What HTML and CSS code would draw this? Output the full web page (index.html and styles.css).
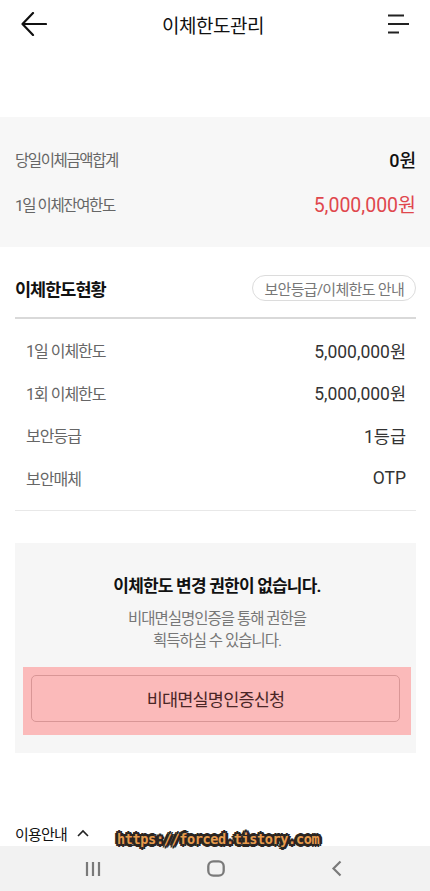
FILE: index.html
```html
<!DOCTYPE html>
<html lang="ko">
<head>
<meta charset="utf-8">
<title>이체한도관리</title>
<link rel="stylesheet" href="styles.css">
</head>
<body>
<div class="page">
  <header class="topbar">
    <button class="icon-btn back" aria-label="뒤로">
      <svg width="26" height="24" viewBox="0 0 26 24"><path d="M12 1 L1.5 12 L12 23 M1.5 12 H25" fill="none" stroke="#111" stroke-width="2.2" stroke-linecap="round" stroke-linejoin="round"/></svg>
    </button>
    <h1 class="title">이체한도관리</h1>
    <button class="icon-btn menu" aria-label="메뉴">
      <svg width="24" height="22" viewBox="0 0 24 22"><path d="M1 2.5 H17 M1 11 H22 M1 19.5 H12" fill="none" stroke="#222" stroke-width="2.2"/></svg>
    </button>
  </header>
  <div class="blank"></div>

  <section class="summary">
    <div class="sum-row"><span class="label">당일이체금액합계</span><span class="val">0원</span></div>
    <div class="sum-row"><span class="label">1일 이체잔여한도</span><span class="val red">5,000,000원</span></div>
  </section>

  <section class="status">
    <div class="status-head">
      <h2>이체한도현황</h2>
      <button class="pill">보안등급/이체한도 안내</button>
    </div>
    <div class="rows">
      <div class="row"><span class="k">1일 이체한도</span><span class="v">5,000,000원</span></div>
      <div class="row"><span class="k">1회 이체한도</span><span class="v">5,000,000원</span></div>
      <div class="row"><span class="k">보안등급</span><span class="v">1등급</span></div>
      <div class="row"><span class="k">보안매체</span><span class="v">OTP</span></div>
    </div>
  </section>

  <section class="notice">
    <p class="notice-title">이체한도 변경 권한이 없습니다.</p>
    <p class="notice-sub">비대면실명인증을 통해 권한을<br>획득하실 수 있습니다.</p>
    <div class="highlight">
      <button class="apply">비대면실명인증신청</button>
    </div>
  </section>

  <div class="guide">이용안내 <svg width="14" height="10" viewBox="0 0 14 10"><path d="M2 8 L7 3 L12 8" fill="none" stroke="#222" stroke-width="1.6"/></svg></div>

  <nav class="navbar">
    <svg class="nav-recent" width="16" height="16" viewBox="0 0 16 16"><path d="M2 1 V15 M8 1 V15 M14 1 V15" stroke="#7a7a7a" stroke-width="2.2"/></svg>
    <svg class="nav-home" width="18" height="17" viewBox="0 0 18 17"><rect x="1.3" y="1.3" width="15.4" height="14.4" rx="5" fill="none" stroke="#7a7a7a" stroke-width="2.3"/></svg>
    <svg class="nav-back" width="12" height="17" viewBox="0 0 12 17"><path d="M9.5 1.5 L2.5 8.5 L9.5 15.5" fill="none" stroke="#7a7a7a" stroke-width="2.2"/></svg>
  </nav>

  <div class="watermark">https://forced.tistory.com</div>
</div>
</body>
</html>
```
FILE: styles.css
```css
html, body {
  margin: 0;
  padding: 0;
  background: #fff;
}
body {
  font-family: Roboto, "Noto Sans CJK KR", sans-serif;
  color: #222;
  width: 430px;
  height: 891px;
  overflow: hidden;
}
.page {
  position: relative;
  width: 430px;
  height: 891px;
  display: flex;
  flex-direction: column;
}
button {
  font-family: inherit;
  background: none;
  border: none;
  padding: 0;
  margin: 0;
  cursor: pointer;
}
.topbar {
  height: 48px;
  display: flex;
  align-items: center;
  justify-content: space-between;
  padding: 0 19px 0 21px;
}
.icon-btn {
  display: flex;
  align-items: center;
}
.title {
  margin: 0 0 0 -8px;
  font-size: 19px;
  font-weight: 400;
  letter-spacing: -0.5px;
  color: #111;
}
.blank {
  height: 69px;
}
.summary {
  background: #f7f7f7;
  padding: 19px 14px 21px 15px;
}
.sum-row {
  height: 45px;
  display: flex;
  align-items: center;
  justify-content: space-between;
}
.sum-row .label {
  font-size: 15.5px;
  letter-spacing: -1.4px;
  color: #666;
}
.sum-row .val {
  font-size: 18px;
  font-weight: 500;
  color: #111;
}
.sum-row .val.red {
  font-weight: 400;
  font-size: 19.5px;
  color: #e0474d;
}
.status {
  padding: 24px 14px 0 15px;
}
.status-head {
  height: 34px;
  display: flex;
  align-items: center;
  justify-content: space-between;
  padding-bottom: 12px;
  border-bottom: 2px solid #d9d9d9;
}
.status-head h2 {
  margin: 0;
  font-size: 17.5px;
  font-weight: 700;
  letter-spacing: -1px;
  color: #111;
}
.pill {
  height: 26px;
  border: 1px solid #dcdcdc;
  border-radius: 13px;
  padding: 0 11px;
  font-size: 15px;
  letter-spacing: -0.7px;
  color: #777;
  background: #fff;
}
.rows {
  padding: 10px 10px 11px 11px;
  border-bottom: 1px solid #e8e8e8;
}
.row {
  height: 42.5px;
  display: flex;
  align-items: center;
  justify-content: space-between;
}
.row .k {
  font-size: 16px;
  letter-spacing: -1px;
  color: #666;
}
.row .v {
  font-size: 17.5px;
  color: #333;
}
.notice {
  margin: 32px 14px 0 15px;
  background: #f6f6f6;
  padding: 30px 5px 18px 8px;
  text-align: center;
}
.notice-title {
  margin: 0;
  line-height: 26px;
  font-size: 17px;
  font-weight: 700;
  letter-spacing: -0.8px;
  color: #111;
}
.notice-sub {
  margin: 9px 0 0;
  line-height: 22px;
  font-size: 15.5px;
  letter-spacing: -1px;
  color: #777;
}
.highlight {
  margin-top: 15px;
  background: #fbbaba;
  padding: 8px 11px 13px 8px;
}
.apply {
  display: block;
  width: 100%;
  height: 47px;
  border: 1px solid #d99696;
  border-radius: 5px;
  font-size: 17.5px;
  letter-spacing: -0.8px;
  color: #4a2626;
}
.guide {
  margin-top: 68px;
  height: 24px;
  padding-left: 15px;
  display: flex;
  align-items: center;
  gap: 9px;
  font-size: 15px;
  letter-spacing: -0.8px;
  color: #111;
}
.navbar {
  margin-top: 1px;
  height: 45px;
  background: #f2f2f2;
  display: flex;
  align-items: center;
  padding-left: 85px;
}
.nav-home {
  margin-left: 106px;
}
.nav-back {
  margin-left: 106px;
}
.watermark {
  position: absolute;
  left: 117px;
  top: 831px;
  font-family: "DejaVu Sans Mono", monospace;
  font-weight: 700;
  font-size: 13.5px;
  letter-spacing: -0.35px;
  color: #e79b4c;
  text-shadow:
    2px 0 0 #2a2522, -2px 0 0 #2a2522, 0 2px 0 #2a2522, 0 -2px 0 #2a2522,
    2px 2px 0 #2a2522, -2px -2px 0 #2a2522, 2px -2px 0 #2a2522, -2px 2px 0 #2a2522,
    3px 0 0 #2a2522, -3px 0 0 #2a2522, 0 3px 0 #2a2522, 0 -3px 0 #2a2522;
}
```
